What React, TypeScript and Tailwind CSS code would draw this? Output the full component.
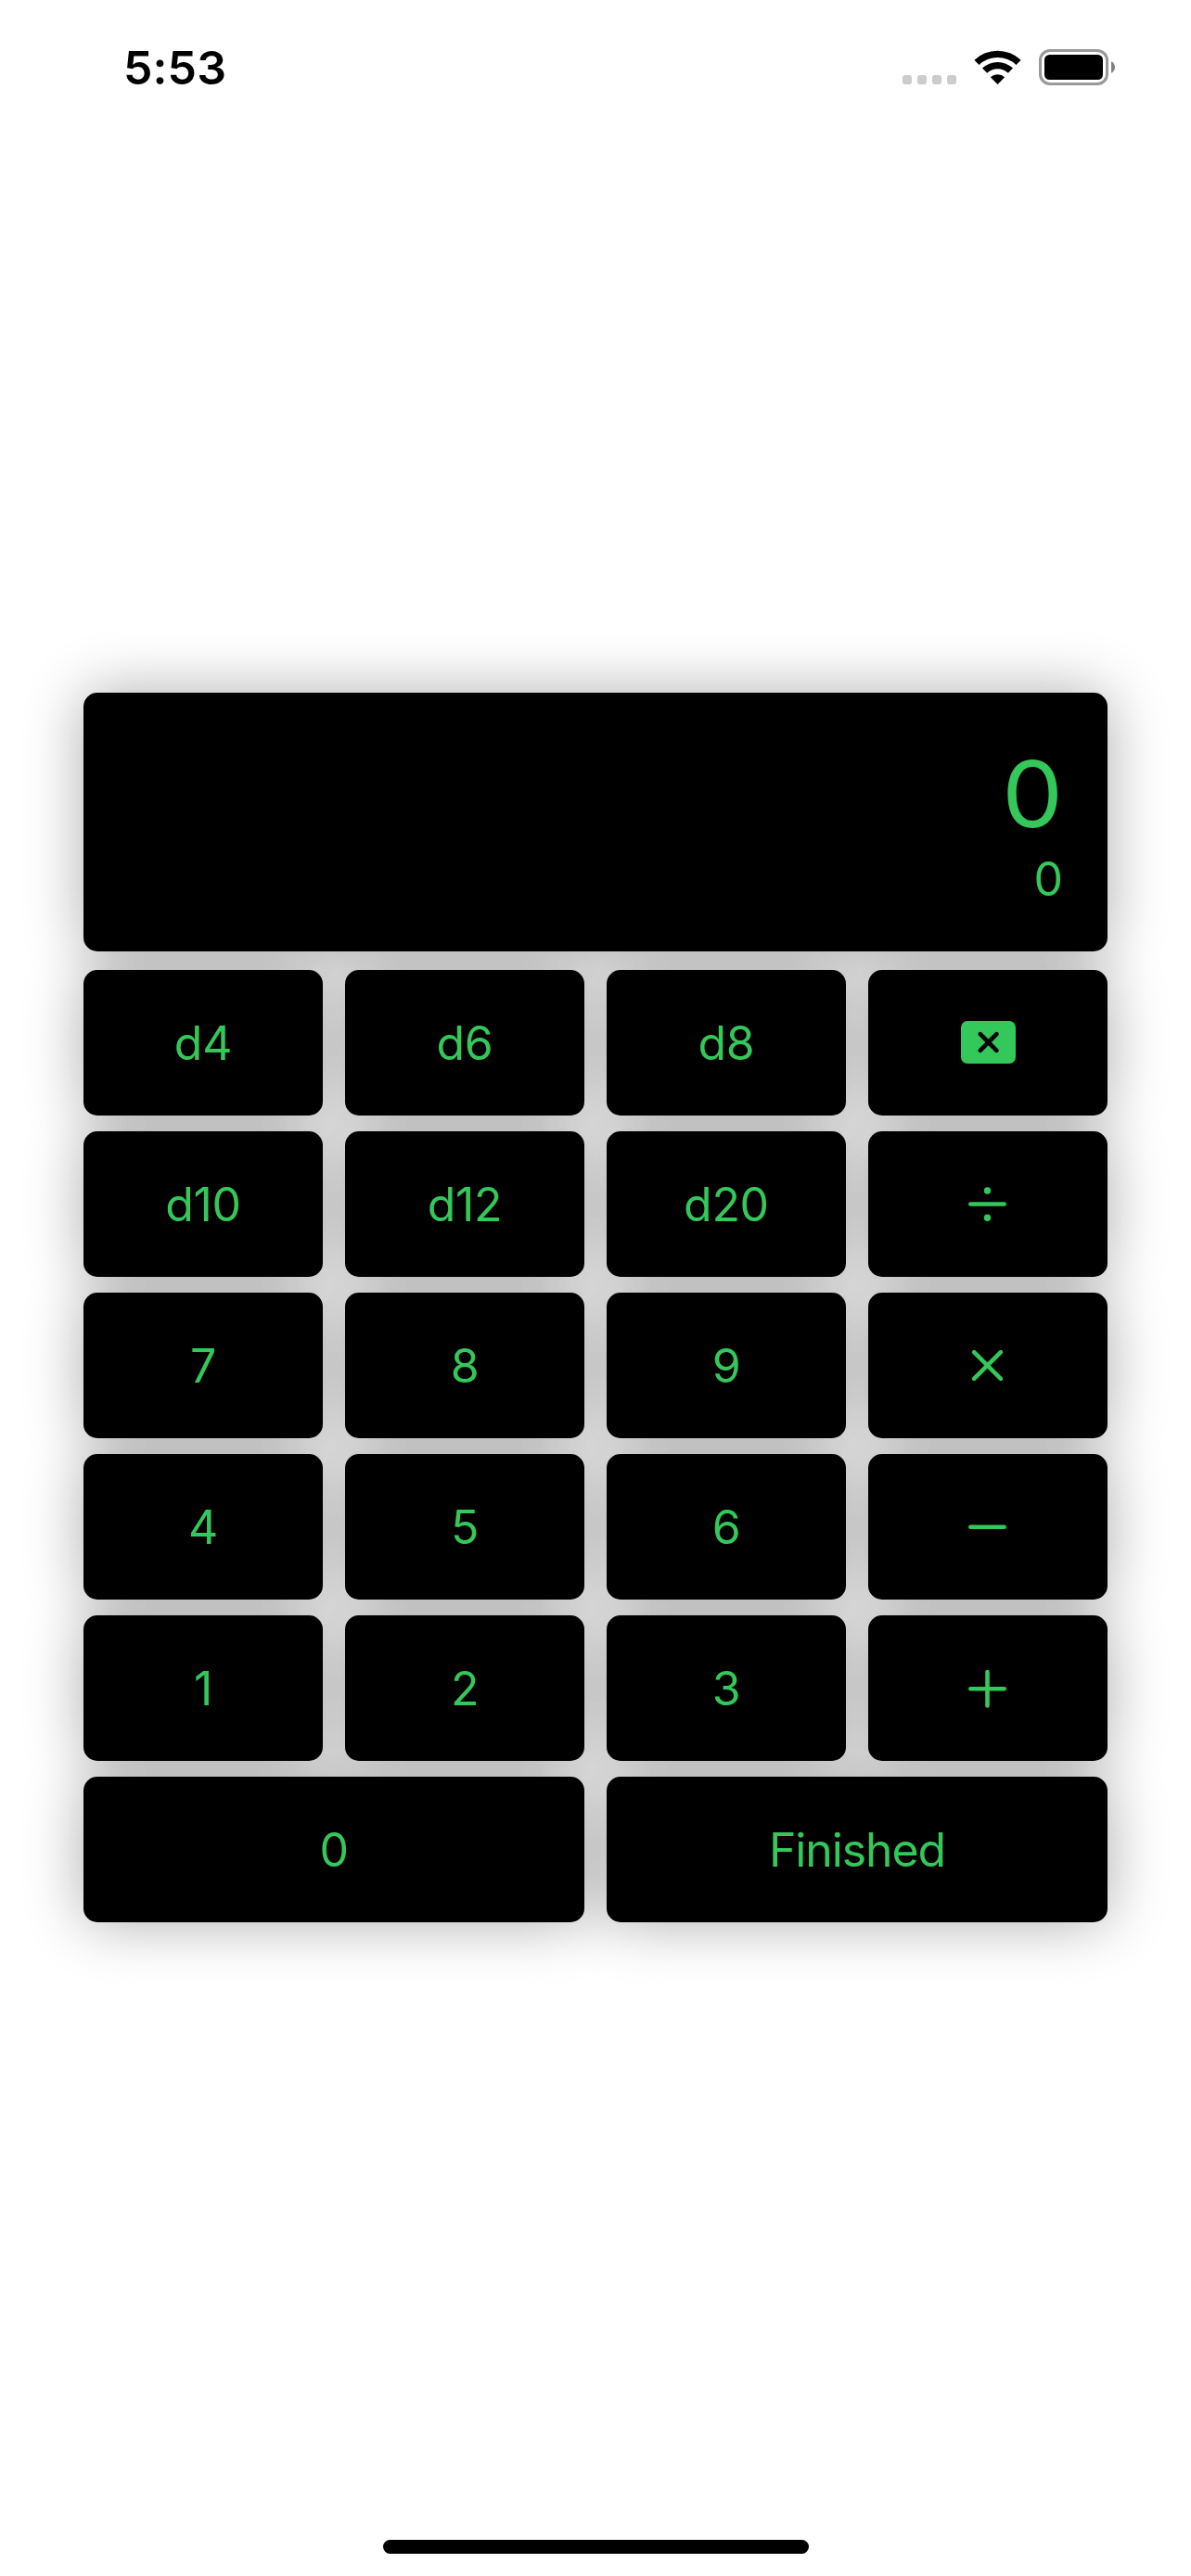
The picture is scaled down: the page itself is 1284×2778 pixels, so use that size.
import type { ReactNode } from "react";

function BackspaceIcon() {
  return (
    <svg className="ml-px mb-px h-[46px] w-[59px]" viewBox="0 0 59 46">
      <rect width="59" height="46" rx="7" fill="#34c759" />
      <path d="M20.8 14.2L38.4 31.8M38.4 14.2L20.8 31.8" stroke="#000" strokeWidth="4.7" strokeLinecap="round" />
    </svg>
  );
}

function OperatorIcon({ children }: { children: ReactNode }) {
  return (
    <svg className="-ml-px h-[43px] w-[43px] fill-[#34c759] stroke-[#34c759]" viewBox="0 0 43 43" strokeWidth="4.6" strokeLinecap="round">
      {children}
    </svg>
  );
}

const keys: { id: string; face: ReactNode; wide?: boolean }[] = [
  { id: "d4", face: "d4" },
  { id: "d6", face: "d6" },
  { id: "d8", face: "d8" },
  { id: "backspace", face: <BackspaceIcon /> },
  { id: "d10", face: "d10" },
  { id: "d12", face: "d12" },
  { id: "d20", face: "d20" },
  {
    id: "divide",
    face: (
      <OperatorIcon>
        <path d="M3.3 21.5H39.7" />
        <circle cx="21.5" cy="7" r="3.7" stroke="none" />
        <circle cx="21.5" cy="36.2" r="3.7" stroke="none" />
      </OperatorIcon>
    ),
  },
  { id: "7", face: "7" },
  { id: "8", face: "8" },
  { id: "9", face: "9" },
  { id: "multiply", face: <OperatorIcon><path d="M7.1 7.1L35.9 35.9M35.9 7.1L7.1 35.9" /></OperatorIcon> },
  { id: "4", face: "4" },
  { id: "5", face: "5" },
  { id: "6", face: "6" },
  { id: "subtract", face: <OperatorIcon><path d="M3.3 21.8H39.7" /></OperatorIcon> },
  { id: "1", face: "1" },
  { id: "2", face: "2" },
  { id: "3", face: "3" },
  { id: "add", face: <OperatorIcon><path d="M3.3 22.2H39.7M21.5 4V40.4" /></OperatorIcon> },
  { id: "0", face: "0", wide: true },
  { id: "finished", face: <span className="tracking-[-1.1px]">Finished</span>, wide: true },
];

function StatusBar() {
  return (
    <header className="flex h-[146px] items-start justify-between pl-[133px] pr-[82px] pt-[53px]">
      <div className="text-[50px] leading-[40px] font-semibold tracking-[0.1px] text-black">5:53</div>
      <div className="flex h-[39px] items-end">
        <div className="mb-px flex gap-[6px]">
          {[0, 1, 2, 3].map((n) => (
            <span key={n} className="size-[10px] rounded-[3px] bg-[#cccccc]" />
          ))}
        </div>
        <svg className="mb-px ml-[19px] h-[37px] w-[51px]" viewBox="0 0 51 37">
          <path d="M0.4 10.8A36.3 36.3 0 0 1 50.6 10.8L45.5 15.9A29 29 0 0 0 5.5 15.9Z" />
          <path d="M9 19.6A24 24 0 0 1 42 19.6L36.8 24.8A16.4 16.4 0 0 0 14.2 24.8Z" />
          <path d="M17.8 29.2A11.8 11.8 0 0 1 33.2 29.2L25.5 37Z" />
        </svg>
        <svg className="ml-[19px] h-[39px] w-[82px]" viewBox="0 0 82 39">
          <rect x="1.5" y="1.5" width="72" height="36" rx="10.5" fill="none" stroke="#999" strokeWidth="3" />
          <rect x="6" y="6" width="63" height="27" rx="5.5" />
          <path d="M78 13.3C80.5 14.4 82 16.7 82 19.5S80.5 24.6 78 25.7Z" fill="#808080" />
        </svg>
      </div>
    </header>
  );
}

export default function App() {
  return (
    <div className="flex h-[2778px] w-[1284px] flex-col overflow-hidden bg-white font-['Inter',sans-serif]">
      <StatusBar />
      <main className="mt-[601px] px-[90px] text-[#34c759]">
        <section className="flex h-[279px] flex-col items-end rounded-[15px] bg-black pr-[48px] pt-[48px] shadow-[0_0_64px_rgba(0,0,0,0.33)]">
          <div className="mt-[2px] origin-right scale-x-[1.06] text-[98.5px] leading-[120px]">0</div>
          <div className="mt-px text-[50px] leading-[60px]">0</div>
        </section>
        <section className="mt-[20px] grid grid-cols-4 gap-x-[24px] gap-y-[17px]">
          {keys.map((key) => (
            <button
              key={key.id}
              className={`flex h-[157px] items-center justify-center rounded-[15px] bg-black text-[50px] leading-[60px] tracking-[-0.3px] shadow-[0_0_64px_rgba(0,0,0,0.33)] ${
                key.wide ? "col-span-2" : ""
              }`}
            >
              {key.face}
            </button>
          ))}
        </section>
      </main>
      <div className="mt-auto mb-[24px] ml-[413px] h-[15px] w-[459px] rounded-full bg-black" />
    </div>
  );
}
